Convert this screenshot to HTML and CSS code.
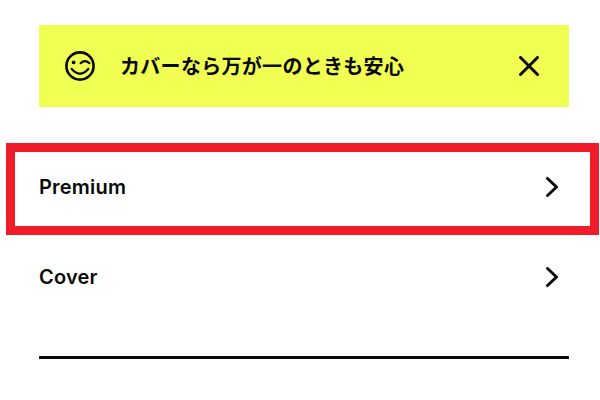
FILE: index.html
```html
<!DOCTYPE html>
<html lang="ja">
<head>
<meta charset="utf-8">
<title>Cover</title>
<link rel="stylesheet" href="styles.css">
</head>
<body>
<main class="page">
  <section class="banner">
    <svg class="smile" viewBox="0 0 30 30" width="30" height="30" fill="none" stroke="#0a0a0a" stroke-width="2.6" stroke-linecap="round">
      <circle cx="15" cy="15" r="13.6"/>
      <circle cx="8.6" cy="11.4" r="1.9" fill="#0a0a0a" stroke="none"/>
      <path d="M15.6 12.2q4.4-4 8.8 0" stroke-width="2.2"/>
      <path d="M6.8 18q8.2 9.4 16.4 0" stroke-width="2.4"/>
    </svg>
    <p class="banner-text">カバーなら万が一のときも安心</p>
    <svg class="close" viewBox="0 0 20 20" width="20" height="20" fill="none" stroke="#0a0a0a" stroke-width="3" stroke-linecap="round">
      <path d="M1.5 1.5l17 17M18.5 1.5l-17 17"/>
    </svg>
  </section>
  <ul class="list">
    <li class="row">
      <span class="label">Premium</span>
      <svg class="chev" viewBox="0 0 12 20" width="12" height="20" fill="none" stroke="#0a0a0a" stroke-width="3" stroke-linecap="round" stroke-linejoin="round"><path d="M1.5 1.5l9 8.5-9 8.5"/></svg>
      <span class="mark"></span>
    </li>
    <li class="row">
      <span class="label">Cover</span>
      <svg class="chev" viewBox="0 0 12 20" width="12" height="20" fill="none" stroke="#0a0a0a" stroke-width="3" stroke-linecap="round" stroke-linejoin="round"><path d="M1.5 1.5l9 8.5-9 8.5"/></svg>
    </li>
  </ul>
  <hr class="rule">
</main>
</body>
</html>
```
FILE: styles.css
```css
* { box-sizing: border-box; }
html, body { margin: 0; padding: 0; background: #fff; }
body { width: 600px; height: 400px; overflow: hidden; font-family: Inter, "Noto Sans CJK JP", sans-serif; color: #0a0a0a; }
.page { padding: 25px 31px 0 39px; }
.banner { height: 82px; background: #f1ff52; display: flex; align-items: center; padding: 0 30px 1px 26px; }
.smile { flex: none; }
.banner-text { flex: 1; margin: 0 0 0 25px; font-size: 20px; font-weight: 700; letter-spacing: 0.3px; font-family: "Noto Sans CJK JP", sans-serif; }
.close { flex: none; }
.list { list-style: none; margin: 35px 0 0; padding: 0; }
.row { position: relative; height: 90px; display: flex; align-items: center; justify-content: space-between; padding-right: 11px; }
.label { font-size: 20px; font-weight: 600; letter-spacing: 0.2px; }
.mark { position: absolute; left: -33px; right: -30px; top: 1px; height: 92px; border: 9px solid #f01c2a; }
.rule { margin: 34px 0 0; border: 0; height: 3px; background: #0a0a0a; }
```
